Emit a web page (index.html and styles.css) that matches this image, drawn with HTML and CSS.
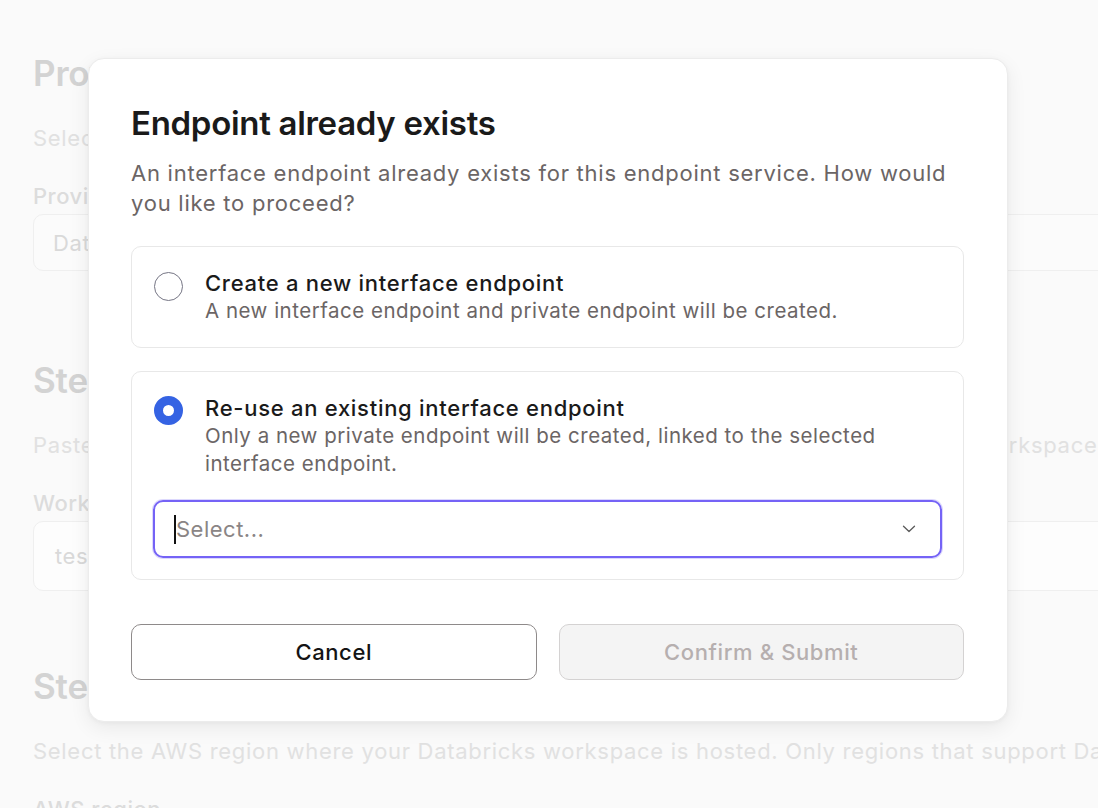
FILE: index.html
```html
<!DOCTYPE html>
<html lang="en">
<head>
<meta charset="utf-8">
<title>Endpoint already exists</title>
<link rel="stylesheet" href="styles.css">
</head>
<body>
<main class="page">
  <section class="step">
    <h2 class="step-title">Provider</h2>
    <p class="step-text">Select the provider for your private connection.</p>
    <label class="field-label">Provider</label>
    <div class="field field-short">Databricks</div>
  </section>
  <section class="step">
    <h2 class="step-title">Step 2</h2>
    <p class="step-text">Paste the workspace URL of your Databricks workspace. We use this to look up your workspace</p>
    <label class="field-label">Workspace URL</label>
    <div class="field field-tall">test-workspace.cloud.databricks.com</div>
  </section>
  <section class="step">
    <h2 class="step-title">Step 3</h2>
    <p class="step-text">Select the AWS region where your Databricks workspace is hosted. Only regions that support Databricks are listed.</p>
    <label class="field-label">AWS region</label>
  </section>
</main>

<div class="modal" role="dialog" aria-labelledby="modal-title">
  <h1 class="modal-title" id="modal-title">Endpoint already exists</h1>
  <p class="modal-desc">An interface endpoint already exists for this endpoint service. How would you like to proceed?</p>

  <div class="options">
    <div class="option">
      <div class="option-row">
        <span class="radio"></span>
        <div class="option-text">
          <div class="option-title">Create a new interface endpoint</div>
          <div class="option-desc">A new interface endpoint and private endpoint will be created.</div>
        </div>
      </div>
    </div>
    <div class="option">
      <div class="option-row">
        <span class="radio radio-checked"></span>
        <div class="option-text">
          <div class="option-title">Re-use an existing interface endpoint</div>
          <div class="option-desc">Only a new private endpoint will be created, linked to the selected interface endpoint.</div>
        </div>
      </div>
      <div class="select">
        <span class="caret"></span>
        <span class="placeholder">Select...</span>
        <svg class="chevron" width="14" height="8" viewBox="0 0 14 8" fill="none"><path d="M1.5 1.2 L7 6.5 L12.5 1.2" stroke="#5a5a5a" stroke-width="1.3" stroke-linecap="round" stroke-linejoin="round"/></svg>
      </div>
    </div>
  </div>

  <div class="actions">
    <button class="btn btn-cancel">Cancel</button>
    <button class="btn btn-confirm" disabled>Confirm &amp; Submit</button>
  </div>
</div>
</body>
</html>
```

FILE: styles.css
```css
* { box-sizing: border-box; }

html, body {
  margin: 0;
  padding: 0;
  height: 100%;
}

body {
  background: #fafafa;
  font-family: Inter, "Noto Sans", "Liberation Sans", sans-serif;
  overflow: hidden;
  width: 1098px;
  height: 808px;
  position: relative;
}

/* background page */
.page {
  padding: 52px 0 0 33px;
  width: 1400px;
}

.step { margin: 0; }

.step-title {
  margin: 0;
  font-size: 35px;
  line-height: 42px;
  font-weight: 600;
  color: #d3d3d3;
  letter-spacing: -0.2px;
}

.step-text {
  margin: 30px 0 0;
  font-size: 22px;
  line-height: 28px;
  letter-spacing: 0.7px;
  color: #e1e1e1;
  white-space: nowrap;
}

.field-label {
  display: block;
  margin-top: 30px;
  font-size: 22px;
  line-height: 28px;
  letter-spacing: 0.5px;
  font-weight: 500;
  color: #dcdcdc;
}

.field {
  margin-top: 4px;
  width: 1200px;
  border: 1px solid #efefef;
  border-radius: 10px;
  background: #fbfbfb;
  color: #d9d9d9;
  font-size: 22px;
  letter-spacing: 0.6px;
  display: flex;
  align-items: center;
}

.field-short {
  height: 57px;
  padding-left: 19px;
  margin-bottom: 88px;
}

.field-tall {
  height: 70px;
  padding-left: 21px;
  background: #fdfdfd;
  margin-bottom: 74px;
}

/* modal */
.modal {
  position: absolute;
  left: 88px;
  top: 58px;
  width: 920px;
  height: 664px;
  background: #ffffff;
  border-radius: 16px;
  border: 1px solid #ececec;
  box-shadow: 0 6px 20px rgba(0, 0, 0, 0.07), 0 1px 4px rgba(0, 0, 0, 0.04);
  padding: 44px 43px 42px 42px;
}

.modal-title {
  margin: 0;
  font-size: 33px;
  line-height: 40px;
  font-weight: 600;
  color: #1a1a1a;
  letter-spacing: -0.3px;
}

.modal-desc {
  margin: 15px 0 0;
  font-size: 22px;
  line-height: 30px;
  letter-spacing: 0.75px;
  color: #6b6565;
}

.options {
  margin-top: 28px;
  display: flex;
  flex-direction: column;
  gap: 23px;
}

.option {
  border: 1px solid #e8e8e8;
  border-radius: 10px;
  padding: 22px 21px 22px 21px;
}

.option + .option { padding-bottom: 21px; }

.option-row {
  display: flex;
  align-items: flex-start;
  gap: 22px;
}

.radio {
  flex: none;
  width: 29px;
  height: 29px;
  border-radius: 50%;
  border: 1.5px solid #757584;
  margin: 3px 0 0 1px;
  background: #fff;
}

.radio-checked {
  border: 9px solid #3563e3;
  margin-top: 2px;
}

.option-title {
  font-size: 22px;
  line-height: 28px;
  letter-spacing: 0.72px;
  font-weight: 500;
  color: #1a1a1a;
}

.option-desc {
  font-size: 20.5px;
  line-height: 28px;
  letter-spacing: 0.5px;
  color: #6b6565;
}

.select {
  margin-top: 22px;
  height: 58px;
  border: 2px solid #7563f6;
  border-radius: 10px;
  box-shadow: 0 0 0 1px rgba(117, 99, 246, 0.25);
  display: flex;
  align-items: center;
  padding: 0 24px 0 19px;
}

.caret {
  flex: none;
  width: 2px;
  height: 29px;
  background: #111;
}

.placeholder {
  flex: 1;
  font-size: 22px;
  letter-spacing: 0.5px;
  color: #8a8585;
}

.chevron { flex: none; }

.actions {
  margin-top: 44px;
  display: flex;
  gap: 22px;
}

.btn {
  flex: 1;
  height: 56px;
  border-radius: 10px;
  font-family: inherit;
  font-size: 22px;
  letter-spacing: 0.6px;
  font-weight: 500;
}

.btn-cancel {
  background: #fff;
  border: 1px solid #8e8a8a;
  color: #141414;
}

.btn-confirm {
  background: #f4f4f4;
  border: 1px solid #d4d2d2;
  color: #b6afaf;
}
```
